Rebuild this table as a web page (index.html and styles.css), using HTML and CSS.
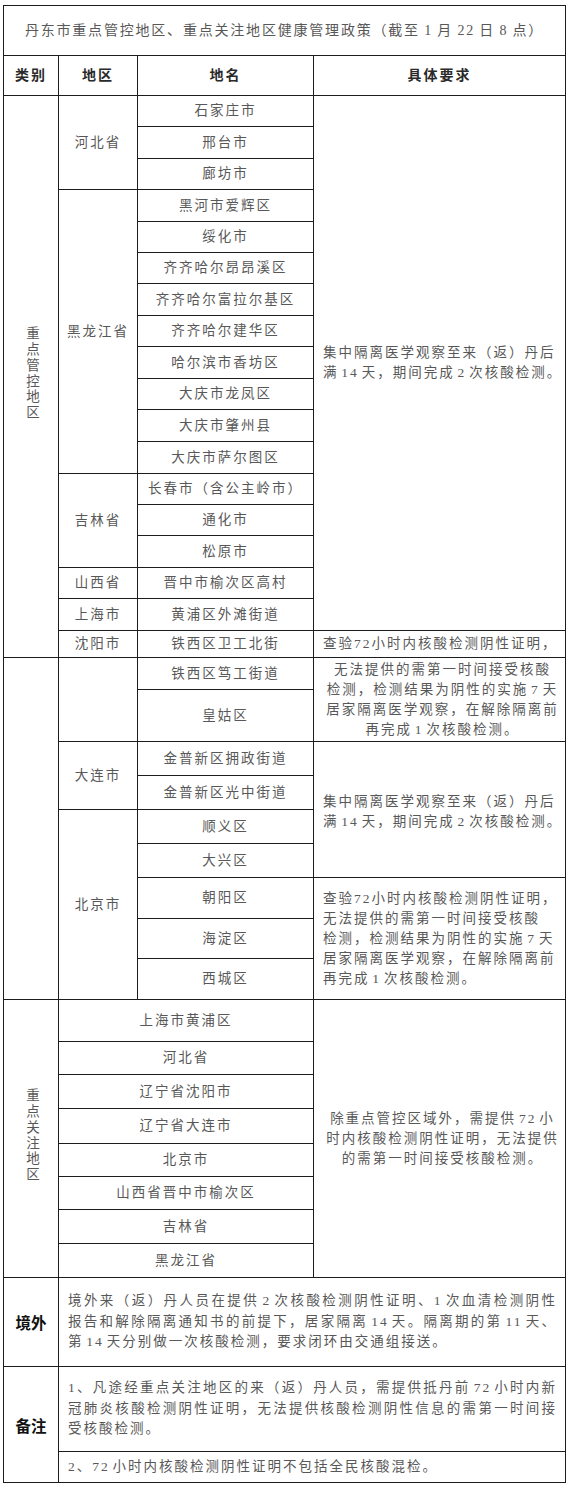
FILE: index.html
```html
<!DOCTYPE html>
<html lang="zh-CN">
<head>
<meta charset="utf-8">
<title>丹东市重点管控地区、重点关注地区健康管理政策</title>
<link rel="stylesheet" href="styles.css">
</head>
<body>
<table class="policy">
  <colgroup>
    <col class="c-cat">
    <col class="c-region">
    <col class="c-place">
    <col class="c-req">
  </colgroup>
  <tr class="h50"><td colspan="4" class="title">丹东市重点管控地区、重点关注地区健康管理政策（截至 1 月 22 日 8 点）</td></tr>
  <tr class="h40"><th>类别</th><th>地区</th><th>地名</th><th>具体要求</th></tr>

  <tr class="h31">
    <td rowspan="18" class="cat"><span class="vert">重点管控地区</span></td>
    <td rowspan="3">河北省</td>
    <td>石家庄市</td>
    <td rowspan="17" class="req left">集中隔离医学观察至来（返）丹后<br>满 14 天，期间完成 2 次核酸检测。</td>
  </tr>
  <tr class="h32"><td>邢台市</td></tr>
  <tr class="h31"><td>廊坊市</td></tr>
  <tr class="h32"><td rowspan="9">黑龙江省</td><td>黑河市爱辉区</td></tr>
  <tr class="h31"><td>绥化市</td></tr>
  <tr class="h31"><td>齐齐哈尔昂昂溪区</td></tr>
  <tr class="h32"><td>齐齐哈尔富拉尔基区</td></tr>
  <tr class="h31"><td>齐齐哈尔建华区</td></tr>
  <tr class="h32"><td>哈尔滨市香坊区</td></tr>
  <tr class="h31"><td>大庆市龙凤区</td></tr>
  <tr class="h32"><td>大庆市肇州县</td></tr>
  <tr class="h32"><td>大庆市萨尔图区</td></tr>
  <tr class="h31"><td rowspan="3">吉林省</td><td>长春市（含公主岭市）</td></tr>
  <tr class="h31"><td>通化市</td></tr>
  <tr class="h32"><td>松原市</td></tr>
  <tr class="h31"><td>山西省</td><td>晋中市榆次区高村</td></tr>
  <tr class="h32"><td>上海市</td><td>黄浦区外滩街道</td></tr>
  <tr class="h27"><td>沈阳市</td><td>铁西区卫工北街</td><td class="req left">查验72小时内核酸检测阴性证明，</td></tr>

  <tr class="h32">
    <td rowspan="9" class="cat"></td>
    <td rowspan="2"></td>
    <td>铁西区笃工街道</td>
    <td rowspan="2" class="req center">无法提供的需第一时间接受核酸<br>检测，检测结果为阴性的实施 7 天<br>居家隔离医学观察，在解除隔离前<br>再完成 1 次核酸检测。</td>
  </tr>
  <tr class="h52"><td>皇姑区</td></tr>
  <tr class="h34">
    <td rowspan="2">大连市</td>
    <td>金普新区拥政街道</td>
    <td rowspan="4" class="req left low">集中隔离医学观察至来（返）丹后<br>满 14 天，期间完成 2 次核酸检测。</td>
  </tr>
  <tr class="h34"><td>金普新区光中街道</td></tr>
  <tr class="h34"><td rowspan="5">北京市</td><td>顺义区</td></tr>
  <tr class="h34"><td>大兴区</td></tr>
  <tr class="h41">
    <td>朝阳区</td>
    <td rowspan="3" class="req left">查验72小时内核酸检测阴性证明，<br>无法提供的需第一时间接受核酸<br>检测，检测结果为阴性的实施 7 天<br>居家隔离医学观察，在解除隔离前<br>再完成 1 次核酸检测。</td>
  </tr>
  <tr class="h40"><td>海淀区</td></tr>
  <tr class="h41"><td>西城区</td></tr>

  <tr class="h42">
    <td rowspan="8" class="cat"><span class="vert">重点关注地区</span></td>
    <td colspan="2">上海市黄浦区</td>
    <td rowspan="8" class="req center">除重点管控区域外，需提供 72 小<br>时内核酸检测阴性证明，无法提供<br>的需第一时间接受核酸检测。</td>
  </tr>
  <tr class="h33"><td colspan="2">河北省</td></tr>
  <tr class="h34"><td colspan="2">辽宁省沈阳市</td></tr>
  <tr class="h35"><td colspan="2">辽宁省大连市</td></tr>
  <tr class="h33"><td colspan="2">北京市</td></tr>
  <tr class="h33"><td colspan="2">山西省晋中市榆次区</td></tr>
  <tr class="h34"><td colspan="2">吉林省</td></tr>
  <tr class="h34"><td colspan="2">黑龙江省</td></tr>

  <tr class="h89">
    <td class="cat strong">境外</td>
    <td colspan="3" class="note"><span class="jl">境外来（返）丹人员在提供 2 次核酸检测阴性证明、1 次血清检测阴性</span><span class="jl">报告和解除隔离通知书的前提下，居家隔离 14 天。隔离期的第 11 天、</span><span class="ln">第 14 天分别做一次核酸检测，要求闭环由交通组接送。</span></td>
  </tr>
  <tr class="h85">
    <td rowspan="2" class="cat strong">备注</td>
    <td colspan="3" class="note"><span class="jl">1、凡途经重点关注地区的来（返）丹人员，需提供抵丹前 72 小时内新</span><span class="jl">冠肺炎核酸检测阴性证明，无法提供核酸检测阴性信息的需第一时间接</span><span class="ln">受核酸检测。</span></td>
  </tr>
  <tr class="h31"><td colspan="3" class="note">2、72 小时内核酸检测阴性证明不包括全民核酸混检。</td></tr>
</table>
</body>
</html>
```

FILE: styles.css
```css
html, body {
  margin: 0;
  padding: 0;
  background: #ffffff;
}

body {
  font-family: "Liberation Serif", "Noto Sans CJK SC", serif;
  color: #585858;
}

.policy {
  margin: 5px 0 0 3px;
  width: 562px;
  table-layout: fixed;
  border-collapse: collapse;
  font-size: 13.5px;
  letter-spacing: 2px;
  word-spacing: -2.5px;
  line-height: 20px;
}

.c-cat { width: 55px; }
.c-region { width: 79px; }
.c-place { width: 176px; }
.c-req { width: 252px; }

.policy td,
.policy th {
  border: 1px solid #1c1c1c;
  padding: 0;
  text-align: center;
  vertical-align: middle;
  white-space: nowrap;
  overflow: hidden;
}

.policy th {
  font-weight: 700;
  color: #2a2a2a;
  font-size: 14px;
  letter-spacing: 2px;
}

.title {
  font-size: 14px;
  letter-spacing: 1.8px;
  word-spacing: -1px;
  color: #585858;
}

.req {
  padding: 0 3px 0 9px !important;
}

.req.left { text-align: left; }
.req.center { text-align: center; }
.req.low { padding-top: 4px !important; }

.vert {
  display: inline-block;
  writing-mode: vertical-rl;
  text-orientation: upright;
  letter-spacing: 2.4px;
  line-height: 16px;
}

.strong {
  font-family: "Noto Sans CJK SC", sans-serif;
  font-weight: 700;
  color: #111111;
  font-size: 15.5px;
  letter-spacing: 0;
}

.note {
  text-align: left !important;
  padding: 0 8px 0 9px !important;
  line-height: 20.5px;
}

.jl {
  display: block;
  white-space: normal;
  text-align: justify;
  text-align-last: justify;
  text-justify: inter-character;
}

.ln {
  display: block;
}

.h27 { height: 27px; }
.h31 { height: 31px; }
.h32 { height: 32px; }
.h33 { height: 33px; }
.h34 { height: 34px; }
.h35 { height: 35px; }
.h40 { height: 40px; }
.h41 { height: 41px; }
.h42 { height: 42px; }
.h50 { height: 50px; }
.h52 { height: 52px; }
.h85 { height: 85px; }
.h89 { height: 89px; }
```
